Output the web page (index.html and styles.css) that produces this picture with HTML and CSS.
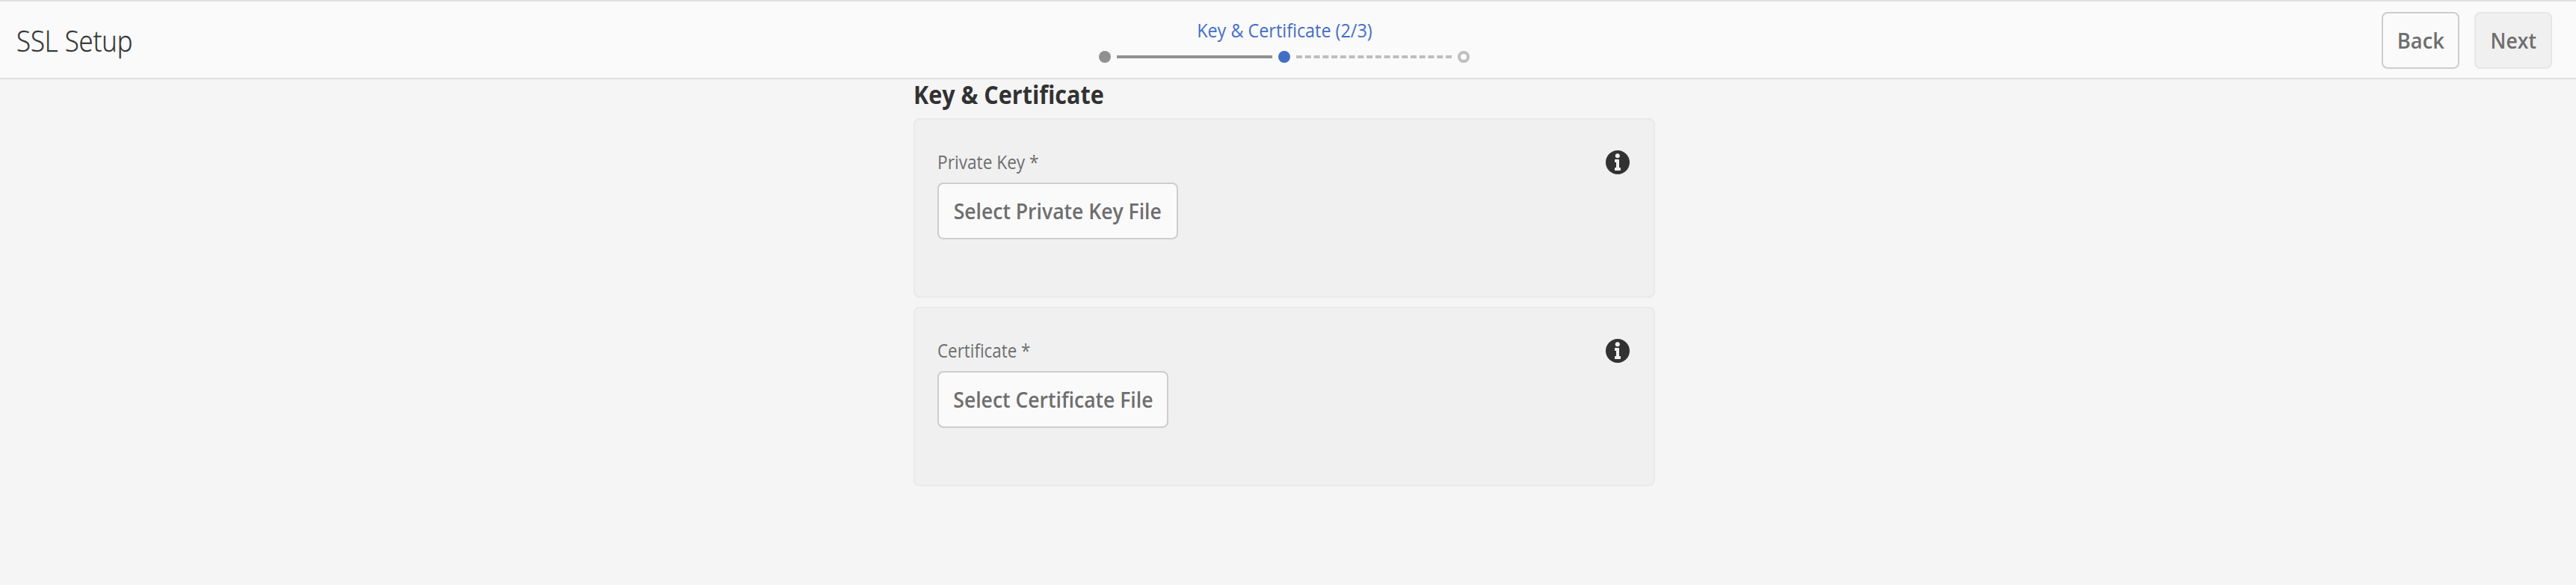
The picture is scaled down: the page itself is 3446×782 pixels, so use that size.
FILE: index.html
```
<!DOCTYPE html>
<html lang="en">
<head>
<meta charset="utf-8">
<title>SSL Setup</title>
<link rel="stylesheet" href="styles.css">
</head>
<body>
<header class="bar">
  <h1 class="title"><span class="fit fit-title">SSL Setup</span></h1>
  <div class="wizard">
    <div class="step-label"><span class="fit fit-step">Key &amp; Certificate (2/3)</span></div>
    <div class="steps">
      <span class="dot dot-done"></span><span class="line"></span><span class="dot dot-current"></span><span class="line line-pending"></span><span class="dot dot-pending"></span>
    </div>
  </div>
  <div class="actions">
    <button class="btn btn-nav"><span class="fit fit-back">Back</span></button>
    <button class="btn btn-nav btn-disabled" disabled><span class="fit fit-next">Next</span></button>
  </div>
</header>
<main class="content">
  <h2 class="heading"><span class="fit fit-heading">Key &amp; Certificate</span></h2>
  <section class="panel">
    <div class="field">
      <label class="label"><span class="fit fit-key">Private Key *</span></label>
      <button class="btn btn-key"><span class="fit fit-file">Select Private Key File</span></button>
    </div>
    <svg class="info" viewBox="0 0 32 32"><circle cx="16" cy="16" r="16" fill="#323232"/><circle cx="15.8" cy="7.2" r="3" fill="#f0f0f0"/><path d="M12.800 12h4.400a.8.8 0 0 1 .8.8V23h1.200a.8.8 0 0 1 .8.8v2.400a.8.8 0 0 1-.8.8h-6.400a.8.8 0 0 1-.8-.8v-2.400a.8.8 0 0 1 .8-.8H14v-7h-1.200a.8.8 0 0 1-.8-.8v-2.400a.8.8 0 0 1 .8-.8z" fill="#f0f0f0"/></svg>
  </section>
  <section class="panel">
    <div class="field">
      <label class="label"><span class="fit fit-cert">Certificate *</span></label>
      <button class="btn btn-cert"><span class="fit fit-file">Select Certificate File</span></button>
    </div>
    <svg class="info" viewBox="0 0 32 32"><circle cx="16" cy="16" r="16" fill="#323232"/><circle cx="15.8" cy="7.2" r="3" fill="#f0f0f0"/><path d="M12.800 12h4.400a.8.8 0 0 1 .8.8V23h1.200a.8.8 0 0 1 .8.8v2.400a.8.8 0 0 1-.8.8h-6.400a.8.8 0 0 1-.8-.8v-2.400a.8.8 0 0 1 .8-.8H14v-7h-1.200a.8.8 0 0 1-.8-.8v-2.400a.8.8 0 0 1 .8-.8z" fill="#f0f0f0"/></svg>
  </section>
</main>
</body>
</html>
```
FILE: styles.css
```
* { box-sizing: border-box; }
body {
  margin: 0;
  min-height: 782px;
  background: #f5f5f5;
  color: #323232;
  font-family: "Open Sans", "Noto Sans", sans-serif;
}
h1, h2 { margin: 0; }

/* Slightly condensed lettering */
.fit { display: inline-block; white-space: nowrap; transform-origin: 0 50%; }
.fit-title { transform: scaleX(.913); }
.fit-step { transform: scaleX(.899); transform-origin: 50% 50%; }
.fit-back { transform: scaleX(.975); transform-origin: 50% 50%; }
.fit-next { transform: scaleX(.95); transform-origin: 50% 50%; }
.fit-heading { transform: scaleX(.897); }
.fit-key { transform: scaleX(.872); }
.fit-cert { transform: scaleX(.86); }
.fit-file { transform: scaleX(.948); transform-origin: 50% 50%; }

.bar {
  display: grid;
  grid-template-columns: 1fr 496px 1fr;
  height: 106px;
  padding: 0 32px 0 22px;
  background: #fafafa;
  border-top: 2px solid #e1e1e1;
  border-bottom: 2px solid #e1e1e1;
}
.title { font-size: 38px; font-weight: 300; line-height: 52px; padding-top: 26px; -webkit-text-stroke: .4px #323232; }
.wizard { width: 496px; padding-top: 20px; }
.step-label { height: 36px; font-size: 26px; line-height: 36px; color: #446ec6; text-align: center; }
.steps { display: flex; align-items: center; gap: 8px; height: 16px; margin-top: 10px; }
.dot { width: 16px; height: 16px; border-radius: 50%; }
.dot-done { background: #919191; }
.dot-current { background: #446ec6; }
.dot-pending { border: 4px solid #bebebe; }
.line { flex: 1; border-top: 4px solid #919191; }
.line-pending { border-top: 4px dashed #bebebe; }
.actions { display: flex; justify-content: flex-end; gap: 20px; padding-top: 14px; }

.btn {
  display: flex;
  justify-content: center;
  align-items: center;
  height: 76px;
  padding: 0;
  border: 2px solid #cdcdcd;
  border-radius: 8px;
  background: #fafafa;
  color: #6e6e6e;
  font: inherit;
  font-size: 28px;
  font-weight: 600;
  line-height: 40px;
}
.btn-nav { width: 104px; }
.btn-disabled { background: #f0f0f0; border-color: #e6e6e6; }
.btn-key { width: 322px; }
.btn-cert { width: 309px; }

.content { width: 992px; margin-left: 1222px; }
.heading { height: 52px; font-size: 34px; font-weight: 700; line-height: 40px; }
.panel {
  display: flex;
  justify-content: space-between;
  height: 240px;
  margin-bottom: 12px;
  padding: 37px 32px 0 30px;
  border: 2px solid #e9e9e9;
  border-radius: 8px;
  background: #f0f0f0;
}
.label { display: block; height: 47px; font-size: 26px; line-height: 38px; color: #6e6e6e; }
.info { width: 32px; height: 32px; margin-top: 4px; }
```
